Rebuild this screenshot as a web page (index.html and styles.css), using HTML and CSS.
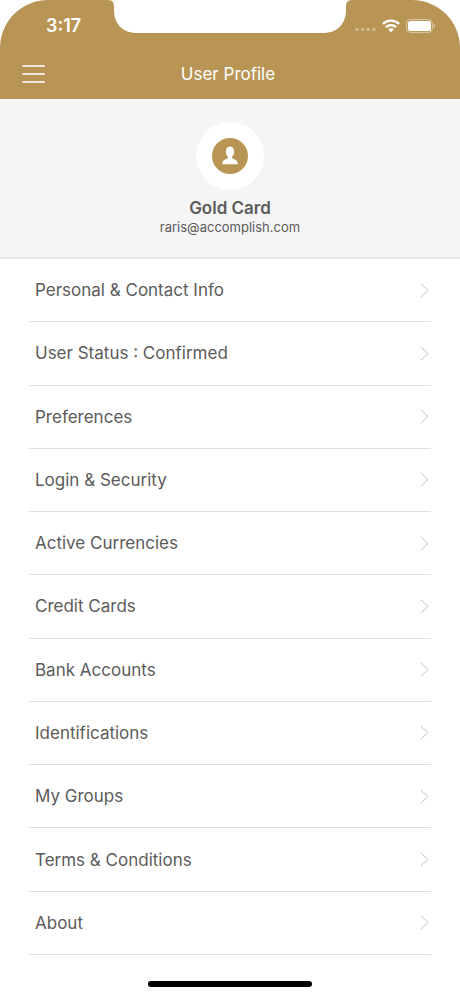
FILE: index.html
```
<!DOCTYPE html>
<html lang="en">
<head>
	<meta charset="utf-8">
	<meta name="viewport" content="width=device-width, initial-scale=1">
	<title>User Profile</title>
	<link rel="stylesheet" href="styles.css">
</head>
<body>
	<header class="header">
		<svg class="notch" width="244" height="34" viewBox="0 0 244 34" aria-hidden="true">
			<path d="M0 0C5 0 6 3 6 7V10C6 24 15 33 29 33H215C229 33 238 24 238 10V7C238 3 239 0 244 0Z" fill="#fff"/>
		</svg>
		<div class="status">
			<span class="time">3:17</span>
			<div class="indicators">
				<svg width="21" height="5" viewBox="0 0 21 5" fill="#fff" opacity=".35" aria-hidden="true">
					<circle cx="2" cy="2.5" r="1.8"/>
					<circle cx="7.7" cy="2.5" r="1.8"/>
					<circle cx="13.3" cy="2.5" r="1.8"/>
					<circle cx="19" cy="2.5" r="1.8"/>
				</svg>
				<svg width="18" height="14" viewBox="0 0 18 14" fill="none" stroke="#fff" stroke-width="2.3" aria-label="Wi-Fi">
					<path d="M.9 4.9C5.4.6 12.6.6 17.1 4.9"/>
					<path d="M3.9 8.1C6.8 5.4 11.2 5.4 14.1 8.1"/>
					<path d="M9 13.2L6.2 10.4C7.8 9 10.2 9 11.8 10.4Z" fill="#fff" stroke="none"/>
				</svg>
				<svg width="30" height="14" viewBox="0 0 30 14" aria-label="Battery">
					<rect x=".6" y=".6" width="25.8" height="12.8" rx="3.8" fill="none" stroke="#fff" stroke-opacity=".5"/>
					<rect x="2" y="2" width="23" height="10" rx="2.5" fill="#fff"/>
					<path d="M27.7 4.8C29.6 5.5 29.6 8.5 27.7 9.2Z" fill="#fff" fill-opacity=".5"/>
				</svg>
			</div>
		</div>
		<div class="navbar">
			<button class="menu" type="button" aria-label="Menu">
				<svg width="24" height="18" viewBox="0 0 24 18" stroke="#fff" stroke-width="1.4" stroke-linecap="round">
					<path d="M1 1H22.4M1 9H22.4M1 17H22.4"/>
				</svg>
			</button>
			<h1 class="title">User Profile</h1>
		</div>
	</header>

	<section class="profile">
		<div class="avatar">
			<svg width="36" height="36" viewBox="0 0 36 36" aria-hidden="true">
				<circle cx="18" cy="18" r="18" fill="#b89554"/>
				<path d="M18 8.6C20.6 8.6 22.2 10.8 22.2 13.8C22.2 16 21.4 17.6 20.1 18.6V20.2C21.6 21.2 25.8 21.6 25.8 26.2H10.200C10.2 21.6 14.4 21.2 15.9 20.2V18.6C14.6 17.6 13.8 16 13.8 13.8C13.8 10.8 15.4 8.6 18 8.6Z" fill="#fff"/>
			</svg>
		</div>
		<h2 class="name">Gold Card</h2>
		<p class="email">raris@accomplish.com</p>
	</section>

	<nav class="list">
		<a class="row" href="#">Personal &amp; Contact Info<svg class="chevron" viewBox="0 0 9 15"><path d="M1 1L8 7.5L1 14"/></svg></a>
		<a class="row" href="#">User Status : Confirmed<svg class="chevron" viewBox="0 0 9 15"><path d="M1 1L8 7.5L1 14"/></svg></a>
		<a class="row" href="#">Preferences<svg class="chevron" viewBox="0 0 9 15"><path d="M1 1L8 7.5L1 14"/></svg></a>
		<a class="row" href="#">Login &amp; Security<svg class="chevron" viewBox="0 0 9 15"><path d="M1 1L8 7.5L1 14"/></svg></a>
		<a class="row" href="#">Active Currencies<svg class="chevron" viewBox="0 0 9 15"><path d="M1 1L8 7.5L1 14"/></svg></a>
		<a class="row" href="#">Credit Cards<svg class="chevron" viewBox="0 0 9 15"><path d="M1 1L8 7.5L1 14"/></svg></a>
		<a class="row" href="#">Bank Accounts<svg class="chevron" viewBox="0 0 9 15"><path d="M1 1L8 7.5L1 14"/></svg></a>
		<a class="row" href="#">Identifications<svg class="chevron" viewBox="0 0 9 15"><path d="M1 1L8 7.5L1 14"/></svg></a>
		<a class="row" href="#">My Groups<svg class="chevron" viewBox="0 0 9 15"><path d="M1 1L8 7.5L1 14"/></svg></a>
		<a class="row" href="#">Terms &amp; Conditions<svg class="chevron" viewBox="0 0 9 15"><path d="M1 1L8 7.5L1 14"/></svg></a>
		<a class="row" href="#">About<svg class="chevron" viewBox="0 0 9 15"><path d="M1 1L8 7.5L1 14"/></svg></a>
	</nav>

	<footer class="footer">
		<div class="home-bar"></div>
	</footer>
</body>
</html>
```
FILE: styles.css
```
* {
	box-sizing: border-box;
}
body {
	display: flex;
	flex-direction: column;
	min-height: 100vh;
	margin: 0;
	font-family: Inter, "Liberation Sans", sans-serif;
	color: #5c5b5b;
	background-color: #fff;
}
.header {
	position: relative;
	color: #fff;
	background-color: #b89554;
	border-radius: 48px 48px 0 0;
}
/* the notch lies over the top edge of the header */
.notch {
	position: absolute;
	top: 0;
	left: 50%;
	transform: translateX(-50%);
}
.status {
	display: flex;
	justify-content: space-between;
	align-items: center;
	height: 48px;
	padding: 3px 24px 0 46px;
}
.time {
	font-size: 18px;
	font-weight: 600;
}
.indicators {
	display: flex;
	align-items: center;
	gap: 6px;
}
.indicators svg:first-child {
	margin-top: 8px;
}
.navbar {
	display: grid;
	grid-template-columns: 48px 1fr 48px;
	align-items: center;
	height: 51px;
	padding-right: 4px;
}
.menu {
	display: flex;
	padding: 0 0 0 22px;
	border: 0;
	background: none;
}
.title {
	margin: 0;
	font-size: 17px;
	font-weight: 400;
	text-align: center;
}
.profile {
	display: flex;
	flex-direction: column;
	align-items: center;
	padding: 23px 16px 21px;
	background-color: #f5f5f5;
	border-bottom: 2px solid #e6e6e6;
}
.avatar {
	display: grid;
	place-items: center;
	width: 68px;
	height: 68px;
	border-radius: 50%;
	background-color: #fff;
}
.name {
	margin: 7px 0 0;
	font-size: 17px;
	font-weight: 600;
	line-height: 22px;
}
.email {
	margin: 0;
	font-size: 13px;
	line-height: 17px;
}
.list {
	display: flex;
	flex: 1;
	flex-direction: column;
	padding: 0 29px;
}
.row {
	display: flex;
	flex: 1;
	justify-content: space-between;
	align-items: center;
	min-height: 48px;
	padding: 0 2px 0 6px;
	font-size: 17px;
	color: inherit;
	text-decoration: none;
	border-bottom: 1px solid #dedede;
}
.chevron {
	width: 9px;
	height: 15px;
	fill: none;
	stroke: #c4c4c4;
	stroke-width: 1;
}
.footer {
	display: flex;
	justify-content: center;
	padding: 26px 0 9px;
}
.home-bar {
	width: 164px;
	height: 6px;
	border-radius: 3px;
	background-color: #000;
}
```
